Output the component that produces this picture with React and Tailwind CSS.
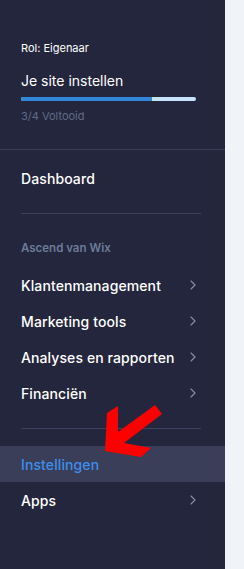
import React from 'react';

const font = { fontFamily: 'Inter, "Noto Sans", sans-serif' };

const Chevron = () => (
  <svg width="6" height="10" viewBox="0 0 6 10" fill="none" className="shrink-0">
    <path d="M1 1l4 4-4 4" stroke="#8a8ea6" strokeWidth="1.1" strokeLinecap="round" strokeLinejoin="round" />
  </svg>
);

const NavRow = ({ label, chevron, active }) => (
  <div
    className={`h-[36px] flex items-center justify-between pl-[21px] pr-[29px] ${
      active ? 'bg-[#3b3e58]' : ''
    }`}
  >
    <span
      className={`text-[14px] font-medium tracking-[0.1px] ${active ? 'text-[#3b8fed]' : 'text-white'}`}
    >
      {label}
    </span>
    {chevron && <Chevron />}
  </div>
);

const Divider = () => <div className="ml-[21px] w-[180px] my-[17px] h-px bg-[#3d4060]" />;

export default function App() {
  return (
    <div className="relative flex w-[244px] h-[569px] overflow-hidden" style={font}>
      <aside className="w-[225px] h-full bg-[#24263d] flex flex-col">
        <div className="h-[150px] border-b border-[#3a3d5a] px-[21px] pt-[40px]">
          <div className="text-[11px] leading-[16px] text-white">Rol: Eigenaar</div>
          <div className="mt-[15px] text-[14px] leading-[20px] text-white">Je site instellen</div>
          <div className="mt-[6px] h-[4px] w-[175px] rounded-full bg-[#c5e3fc] overflow-hidden">
            <div className="h-full w-[75%] bg-[#3186d9]" />
          </div>
          <div className="mt-[7px] text-[11px] leading-[16px] text-[#5f6d86]">3/4 Voltooid</div>
        </div>

        <div className="pt-[10px]">
          <NavRow label="Dashboard" />
          <Divider />
          <div className="h-[36px] flex items-center px-[21px]">
            <span className="text-[11.5px] font-semibold text-[#6b7c99]">Ascend van Wix</span>
          </div>
          <NavRow label="Klantenmanagement" chevron />
          <NavRow label="Marketing tools" chevron />
          <NavRow label="Analyses en rapporten" chevron />
          <NavRow label="Financiën" chevron />
          <Divider />
          <NavRow label="Instellingen" active />
          <NavRow label="Apps" chevron />
        </div>
      </aside>
      <div className="flex-1 h-full bg-[#f0f3f7]" />

      <svg
        className="absolute left-0 top-0 pointer-events-none"
        width="244"
        height="569"
        viewBox="0 0 244 569"
      >
        <polygon
          points="105,451 107,413 118,406 118,432 155,405 162,414 124,443 151,448 141,457"
          fill="#ff0000"
        />
      </svg>
    </div>
  );
}
